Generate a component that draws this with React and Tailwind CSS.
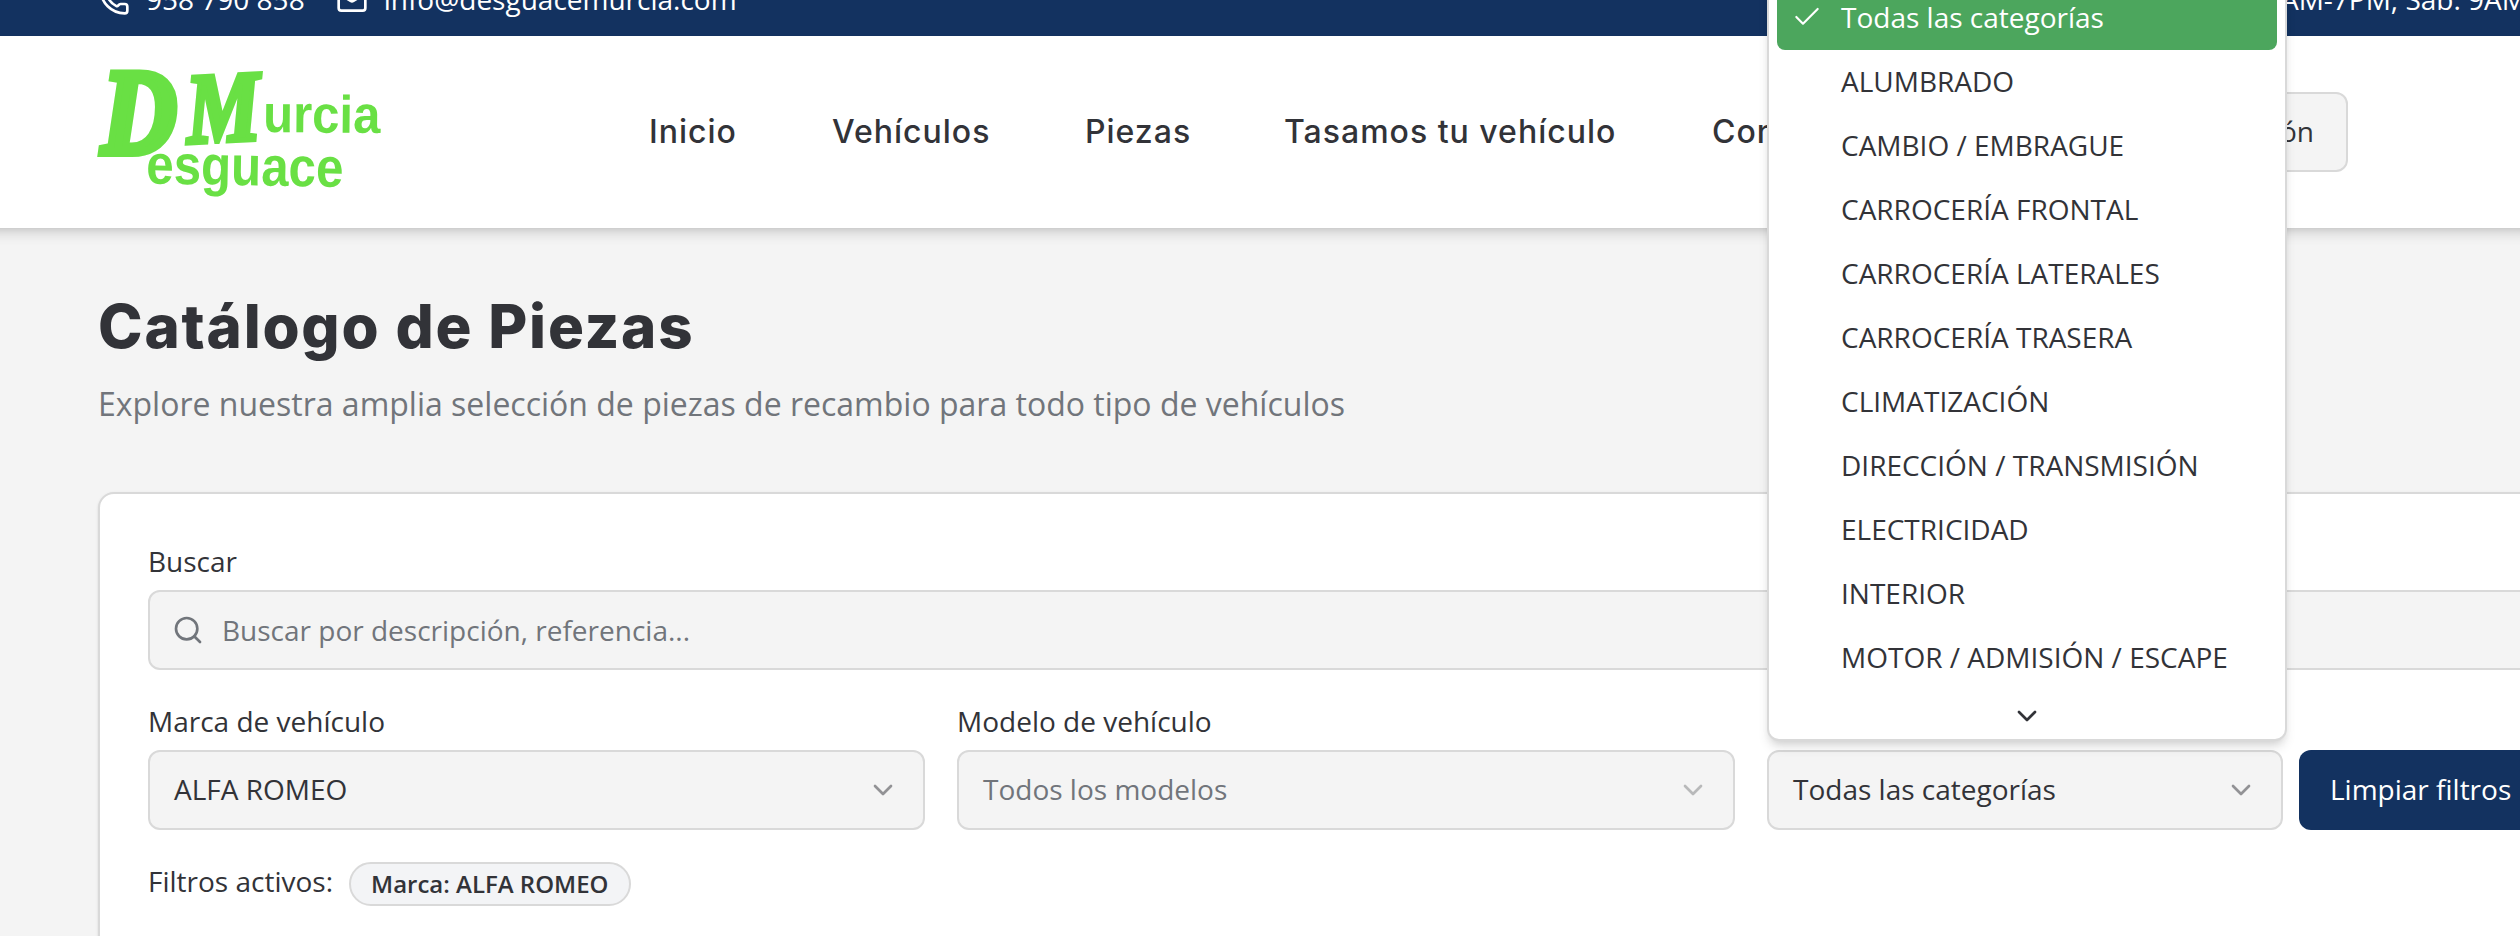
import { Phone, Mail, Search, ChevronDown, Check } from "lucide-react";

const NAV = [
  ["Inicio", "w-[87px]"],
  ["Vehículos", "w-[157px]"],
  ["Piezas", "w-[103px]"],
  ["Tasamos tu vehículo", "w-[332px]"],
  ["Contacto", "w-[160px]"],
];

const CATEGORIES = [
  "ALUMBRADO",
  "CAMBIO / EMBRAGUE",
  "CARROCERÍA FRONTAL",
  "CARROCERÍA LATERALES",
  "CARROCERÍA TRASERA",
  "CLIMATIZACIÓN",
  "DIRECCIÓN / TRANSMISIÓN",
  "ELECTRICIDAD",
  "INTERIOR",
  "MOTOR / ADMISIÓN / ESCAPE",
];

function Logo() {
  return (
    <svg width="284" height="132" viewBox="0 0 284 132" fill="#69e044" className="block shrink-0 overflow-visible">
      <g fontFamily="Liberation Serif, serif" fontWeight="700" fontStyle="italic" stroke="#69e044">
        <text transform="translate(4 87) scale(.86 1)" fontSize="120" strokeWidth="8">D</text>
        <text transform="translate(90 77) rotate(-3) scale(.83 1)" fontSize="100" strokeWidth="5">M</text>
      </g>
      <g fontFamily="Liberation Sans, sans-serif" fontWeight="700">
        <text transform="translate(165 66) rotate(.5) scale(.85 1)" fontSize="53" textLength="138" lengthAdjust="spacingAndGlyphs">urcia</text>
        <text transform="translate(48 117.5) rotate(1) scale(.9 1)" fontSize="56" textLength="219" lengthAdjust="spacingAndGlyphs">esguace</text>
      </g>
    </svg>
  );
}

function Select({ value, muted, faded, label, width }) {
  return (
    <div className={`shrink-0 ${width}`}>
      <div className="h-[48px] text-[28px] leading-[38px] whitespace-nowrap">{label}</div>
      <div className="flex h-20 items-center justify-between rounded-[12px] border-2 border-[#d9d9d9] bg-[#f4f4f4] px-6">
        <span className={`pb-[2px] text-[28px] leading-[40px] ${muted ? "text-[#71757b]" : ""}`}>{value}</span>
        <ChevronDown size={32} className={faded ? "opacity-30" : "opacity-50"} />
      </div>
    </div>
  );
}

export default function App() {
  return (
    <div className="relative h-[936px] w-full overflow-hidden bg-[#f4f4f4] font-['Open_Sans',sans-serif] text-[#323338]">
      <div className="flex h-9 items-end justify-between bg-[#133260] text-[28px] leading-[40px] text-white">
        <div className="flex items-center pb-[17px] pl-[98px] whitespace-nowrap">
          <Phone size={32} className="mt-px" />
          <span className="ml-4">958 790 858</span>
          <Mail size={32} className="mt-px ml-[31px]" />
          <span className="ml-4">info@desguacemurcia.com</span>
        </div>
        <div className="-mr-[74px] pb-[17px] whitespace-nowrap">Lun-Vie: 9AM-7PM, Sáb: 9AM-2PM</div>
      </div>

      <header className="relative -mx-8 flex h-48 items-center bg-white px-8 shadow-[0_8px_12px_-2px_rgba(0,0,0,0.12),0_4px_8px_-4px_rgba(0,0,0,0.12)]">
        <div className="ml-[98px] w-[551px] shrink-0">
          <Logo />
        </div>
        <nav className="flex shrink-0 gap-24 font-['Inter',sans-serif] text-[32px] leading-[48px] font-medium tracking-[1px]">
          {NAV.map(([label, width]) => (
            <a key={label} className={`${width} whitespace-nowrap`}>{label}</a>
          ))}
        </nav>
        <div className="ml-[244px] flex h-20 w-[232px] shrink-0 items-center justify-end rounded-[12px] border-2 border-[#d9d9d9] bg-[#f4f4f4] pr-8 pb-[2px] text-[28px] whitespace-nowrap">
          Iniciar sesión
        </div>
      </header>

      <main className="pt-16 pl-[98px]">
        <h1 className="h-[72px] font-['Inter',sans-serif] text-[60px] leading-[69px] font-extrabold tracking-[1.8px] whitespace-nowrap">Catálogo de Piezas</h1>
        <p className="mt-4 text-[32px] leading-[48px] whitespace-nowrap text-[#71757b]">
          Explore nuestra amplia selección de piezas de recambio para todo tipo de vehículos
        </p>
        <section className="mt-16 h-[600px] w-[2600px] rounded-[16px] border-2 border-[#d9d9d9] bg-white p-12 shadow-sm">
          <div className="h-12 text-[28px] leading-[38px]">Buscar</div>
          <div className="flex h-20 items-center rounded-[12px] border-2 border-[#d9d9d9] bg-[#f4f4f4] pl-[22px] text-[28px] text-[#71757b]">
            <Search size={32} />
            <span className="ml-[18px]">Buscar por descripción, referencia...</span>
          </div>
          <div className="mt-8 flex items-end gap-8">
            <Select label="Marca de vehículo" value="ALFA ROMEO" width="w-[777px]" />
            <Select label="Modelo de vehículo" value="Todos los modelos" muted faded width="w-[778px]" />
            <div className="flex items-end gap-4">
              <Select label="Categoría" value="Todas las categorías" width="w-[516px]" />
              <button className="h-20 rounded-[12px] bg-[#133260] px-[31px] pb-[2px] text-[28px] whitespace-nowrap text-white">Limpiar filtros</button>
            </div>
          </div>
          <div className="mt-8 flex items-center gap-4">
            <span className="pb-[5px] text-[28px] leading-[39px]">Filtros activos:</span>
            <span className="flex h-11 items-center rounded-full border-2 border-[#d9d9d9] bg-[#f3f4f6] px-5 pb-px text-[24px] leading-[32px] font-semibold whitespace-nowrap">Marca: ALFA ROMEO</span>
          </div>
        </section>
      </main>

      <div className="absolute -top-8 left-[1767px] flex h-[773px] w-[520px] flex-col rounded-[12px] border-2 border-[#d9d9d9] bg-white px-2 text-[28px] leading-[40px] shadow-[0_8px_12px_-2px_rgba(0,0,0,0.12),0_4px_8px_-4px_rgba(0,0,0,0.12)]">
        <div className="mt-4 flex h-16 shrink-0 items-center rounded-[8px] bg-[#4ca65d] pb-[2px] pl-[14px] text-white">
          <Check size={32} strokeWidth={1.6} />
          <span className="ml-[18px]">Todas las categorías</span>
        </div>
        {CATEGORIES.map((name) => (
          <div key={name} className="flex h-16 shrink-0 items-center pb-[2px] pl-16 whitespace-nowrap">{name}</div>
        ))}
        <div className="flex h-[52px] shrink-0 items-center justify-center">
          <ChevronDown size={32} />
        </div>
      </div>
    </div>
  );
}
